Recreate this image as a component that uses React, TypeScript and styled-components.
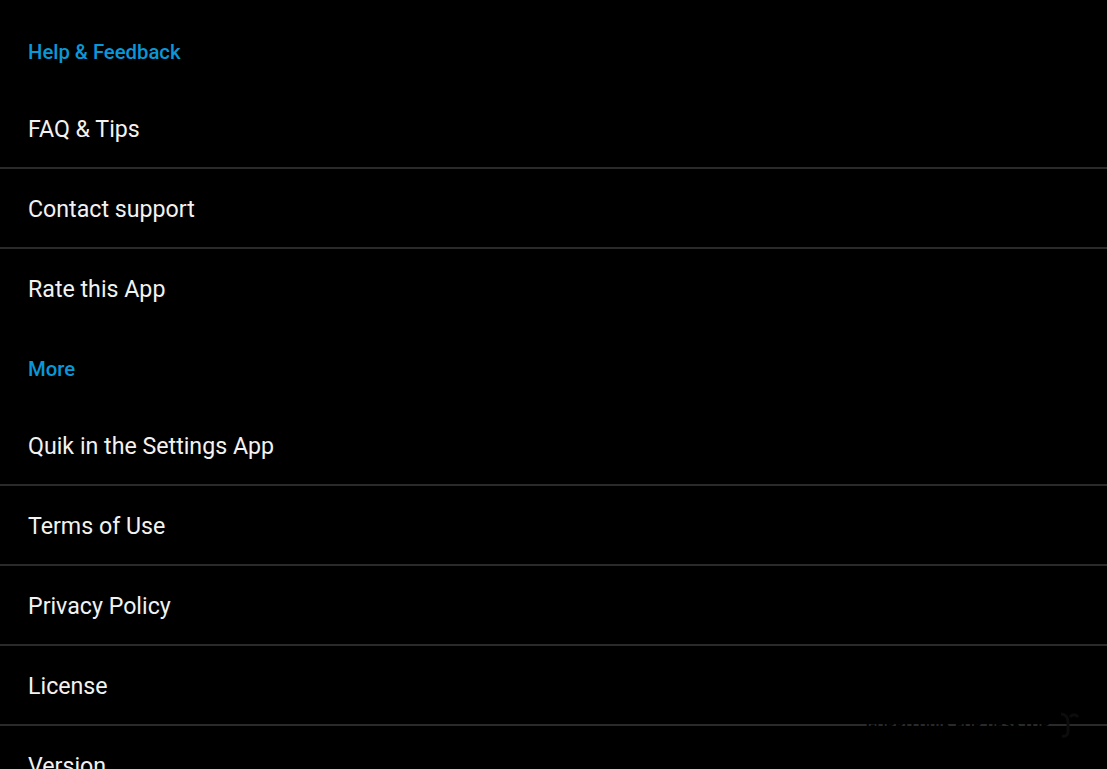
import styled, { createGlobalStyle } from "styled-components";

const GlobalStyle = createGlobalStyle`
  html, body {
    margin: 0;
    padding: 0;
    background: #000;
  }
  body {
    font-family: Roboto, "Noto Sans", "Liberation Sans", sans-serif;
    overflow: hidden;
  }
`;

interface Section {
  title: string;
  items: string[];
}

const sections: Section[] = [
  {
    title: "Help & Feedback",
    items: ["FAQ & Tips", "Contact support", "Rate this App"],
  },
  {
    title: "More",
    items: [
      "Quik in the Settings App",
      "Terms of Use",
      "Privacy Policy",
      "License",
      "Version",
    ],
  },
];

const App = () => {
  return (
    <>
      <GlobalStyle />
      <Screen>
        {sections.map((section) => (
          <Group key={section.title}>
            <Header>{section.title}</Header>
            {section.items.map((item, i) => (
              <Row key={item} $divider={i < section.items.length - 1}>
                <RowLabel>{item}</RowLabel>
              </Row>
            ))}
          </Group>
        ))}
        {/* faded overlay sitting on the last divider */}
        <Watermark>
          <WatermarkText>GOPRO QUIK FOR DESKTOP</WatermarkText>
          <WatermarkIcon viewBox="0 0 24 30">
            <path d="M5 4c4 0 7 3 7 8v10c0 3-3 5-6 4" />
            <path d="M14 7c2-3 6-3 8 0" />
          </WatermarkIcon>
        </Watermark>
      </Screen>
    </>
  );
};

export default App;

const Screen = styled.div`
  position: relative;
  height: 769px;
  padding-top: 12px;
  box-sizing: border-box;
  background: #000;
  overflow: hidden;
`;

const Group = styled.section`
  display: flex;
  flex-direction: column;
`;

const Header = styled.div`
  height: 77px;
  display: flex;
  align-items: center;
  padding: 3px 28px 0;
  box-sizing: border-box;
  font-size: 20.3px;
  font-weight: 500;
  color: #0a97d8;
`;

const Row = styled.div<{ $divider: boolean }>`
  height: 80px;
  display: flex;
  align-items: center;
  padding: 2px 28px 0;
  box-sizing: border-box;
  border-bottom: 2px solid ${({ $divider }) => ($divider ? "#2a2a2a" : "transparent")};
`;

const RowLabel = styled.span`
  font-size: 23.2px;
  color: #f2f2f2;
`;

const Watermark = styled.div`
  position: absolute;
  left: 866px;
  top: 706px;
  display: flex;
  align-items: center;
  gap: 6px;
  white-space: nowrap;
`;

const WatermarkText = styled.span`
  font-size: 14px;
  font-weight: 700;
  color: #000;
  letter-spacing: 0.3px;
`;

const WatermarkIcon = styled.svg`
  width: 24px;
  height: 38px;
  fill: none;
  stroke: #0c0c0c;
  stroke-width: 3;
`;
